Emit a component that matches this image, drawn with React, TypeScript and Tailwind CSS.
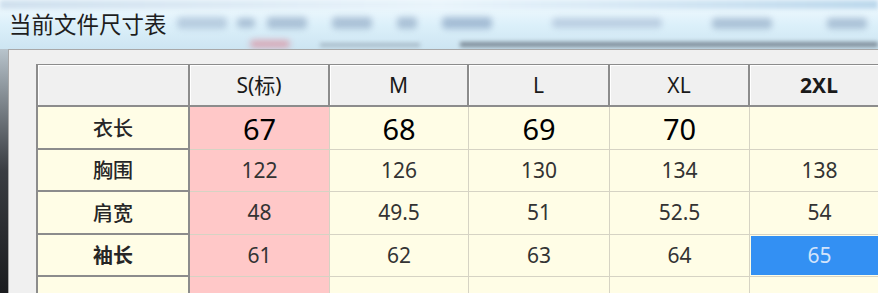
import React from 'react';

const sizes = ['S(标)', 'M', 'L', 'XL', '2XL'];

const rows = [
  { label: '衣长', values: ['67', '68', '69', '70', ''], big: true, bold: false },
  { label: '胸围', values: ['122', '126', '130', '134', '138'], big: false, bold: false },
  { label: '肩宽', values: ['48', '49.5', '51', '52.5', '54'], big: false, bold: false },
  { label: '袖长', values: ['61', '62', '63', '64', '65'], big: false, bold: true },
];

const rowHeights = ['h-[43px]', 'h-[42px]', 'h-[43px]', 'h-[42px]'];

// blurred window behind the dialog title
const BlurredToolbar: React.FC = () => (
  <div className="flex h-[49px] flex-col overflow-hidden bg-gradient-to-b from-[#f4fbff] via-[#dcf0fa] to-[#cde5f2]">
    <div className="h-[9px] shrink-0 bg-gradient-to-r from-[#cfe0ee] via-[#e9f4fb] to-[#bcd8ec] blur-[2px]" />
    <div className="flex h-[28px] shrink-0 items-center">
      <div className="ml-[9px] shrink-0 text-[22.5px] leading-[26px] text-[#1e1e1e] [font-family:'Noto_Sans_CJK_SC',sans-serif]">
        当前文件尺寸表
      </div>
      <div className="ml-[10px] flex items-center gap-[10px] opacity-60 blur-[3px]">
        <div className="h-[12px] w-[50px] rounded bg-[#9fb6cf]" />
        <div className="h-[10px] w-[18px] rounded bg-[#8aa3c0]" />
        <div className="ml-[2px] h-[12px] w-[40px] rounded bg-[#8aa3c0]" />
        <div className="ml-[15px] h-[12px] w-[40px] rounded bg-[#8aa3c0]" />
        <div className="ml-[15px] h-[12px] w-[20px] rounded bg-[#8aa3c0]" />
        <div className="ml-[15px] h-[12px] w-[50px] rounded bg-[#7f9bbd]" />
        <div className="ml-[50px] h-[10px] w-[110px] rounded bg-[#a4b8d2]" />
        <div className="ml-[40px] h-[11px] w-[60px] rounded bg-[#8aa3c0]" />
        <div className="ml-[45px] h-[11px] w-[40px] rounded bg-[#8aa3c0]" />
      </div>
    </div>
    <div className="mt-[3px] flex h-[8px] items-end">
      <div className="ml-[250px] h-[8px] w-[40px] rounded-full bg-[#e06a7a] opacity-50 blur-[3px]" />
      <div className="mb-[1px] ml-[30px] h-[4px] w-[100px] bg-[#7d8a99] opacity-50 blur-[2px]" />
      <div className="mb-[1px] ml-[40px] h-[5px] flex-1 bg-[#56606c] opacity-70 blur-[2px]" />
    </div>
  </div>
);

const App: React.FC = () => {
  return (
    <div className="h-[293px] w-[878px] overflow-hidden bg-[#f0f0f0] [font-family:'Noto_Sans','Noto_Sans_CJK_SC',sans-serif]">
      <BlurredToolbar />
      <div className="flex h-[244px]">
        <div className="w-[8px] shrink-0 bg-gradient-to-b from-[#b8c4cc] via-[#3a3d42] to-[#1b1c1f]" />
        <div className="min-w-0 flex-1 overflow-hidden border-l border-t border-[#a8a8a8] bg-[#f0f0f0] pl-[27px] pt-[14px]">
          <div className="w-max border-l-2 border-t border-[#8c8c8c]">
            <div className="grid grid-cols-[152px_140px_139px_141px_140px_140px]">
              <div className="h-[42px] border-b-2 border-r-2 border-[#8c8c8c] bg-[#f0f0f0] shadow-[inset_1px_1px_0_#ffffff]" />
              {sizes.map((s) => (
                <div
                  key={s}
                  className={`flex h-[42px] items-center justify-center border-b-2 border-r-2 border-[#8c8c8c] bg-[#f0f0f0] pt-[2px] text-[21px] text-[#1a1a1a] shadow-[inset_1px_1px_0_#ffffff] ${s === '2XL' ? 'font-bold' : ''}`}
                >
                  {s}
                </div>
              ))}

              {rows.map((r, ri) =>
                <React.Fragment key={r.label}>
                  <div
                    className={`flex ${rowHeights[ri]} items-center justify-center border-b-2 border-r-2 border-[#8c8c8c] bg-[#fffde6] text-[20px] text-[#262626] [font-family:'Noto_Sans_CJK_SC',sans-serif] ${r.bold ? 'font-bold' : 'font-medium'}`}
                  >
                    {r.label}
                  </div>
                  {r.values.map((v, ci) => {
                    const selected = ri === 3 && ci === 4;
                    return (
                      <div
                        key={ci}
                        className={`flex ${rowHeights[ri]} items-stretch border-b border-r border-[#d6d3c4] ${ci === 0 ? 'bg-[#ffc8c8]' : 'bg-[#fffde6]'}`}
                      >
                        <div
                          className={`flex flex-1 items-center justify-center ${r.big ? 'pt-[2px] text-[29px] text-black' : 'text-[21px] text-[#333333]'} ${selected ? 'm-[1px] bg-[#3390f3] !text-[#d2e4fb]' : ''}`}
                        >
                          {v}
                        </div>
                      </div>
                    );
                  })}
                </React.Fragment>
              )}

              <div className="h-[20px] border-r-2 border-[#8c8c8c] bg-[#fffde6]" />
              <div className="h-[20px] border-r border-[#d6d3c4] bg-[#ffc8c8]" />
              <div className="h-[20px] border-r border-[#d6d3c4] bg-[#fffde6]" />
              <div className="h-[20px] border-r border-[#d6d3c4] bg-[#fffde6]" />
              <div className="h-[20px] border-r border-[#d6d3c4] bg-[#fffde6]" />
              <div className="h-[20px] border-r border-[#d6d3c4] bg-[#fffde6]" />
            </div>
          </div>
        </div>
      </div>
    </div>
  );
};

export default App;
